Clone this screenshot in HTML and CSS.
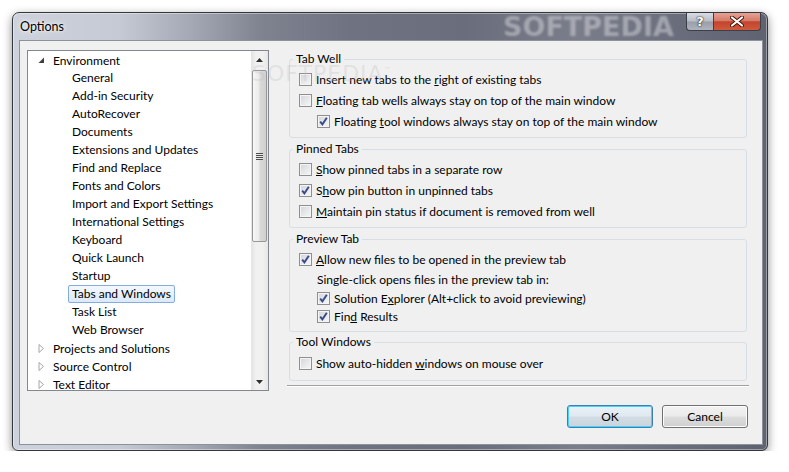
FILE: index.html
```
<!DOCTYPE html>
<html lang="en">
<head>
 <meta charset="UTF-8">
 <title>Options</title>
 <link rel="stylesheet" href="styles.css">
</head>
<body>
<div class="window">
 <div class="titlebar">
   <span class="title">Options</span>
   <span class="watermark">SOFTPEDIA</span>
   <div class="caption-buttons">
     <div class="cap-btn help">?</div>
     <div class="cap-btn close">
       <svg width="14" height="11" viewBox="0 0 14 11"><path d="M2 1.5 L12 9.5 M12 1.5 L2 9.5" stroke="#4a1208" stroke-width="4" stroke-linecap="round"/><path d="M2 1.5 L12 9.5 M12 1.5 L2 9.5" stroke="#fff" stroke-width="2.2" stroke-linecap="round"/></svg>
     </div>
   </div>
 </div>
 <div class="client">
   <div class="main">
     <div class="tree">
       <div class="tree-items">
         <div class="node"><span class="exp"><svg width="7" height="7" viewBox="0 0 7 7"><polygon points="6,0.5 6,6 0.5,6" fill="#404040"/></svg></span>Environment</div>
         <div class="node child"><span class="label">General</span></div>
         <div class="node child"><span class="label">Add-in Security</span></div>
         <div class="node child"><span class="label">AutoRecover</span></div>
         <div class="node child"><span class="label">Documents</span></div>
         <div class="node child"><span class="label">Extensions and Updates</span></div>
         <div class="node child"><span class="label">Find and Replace</span></div>
         <div class="node child"><span class="label">Fonts and Colors</span></div>
         <div class="node child"><span class="label">Import and Export Settings</span></div>
         <div class="node child"><span class="label">International Settings</span></div>
         <div class="node child"><span class="label">Keyboard</span></div>
         <div class="node child"><span class="label">Quick Launch</span></div>
         <div class="node child"><span class="label">Startup</span></div>
         <div class="node child"><span class="label selected">Tabs and Windows</span></div>
         <div class="node child"><span class="label">Task List</span></div>
         <div class="node child"><span class="label">Web Browser</span></div>
         <div class="node"><span class="exp"><svg width="7" height="9" viewBox="0 0 7 9"><polygon points="1,0.5 5.5,4.5 1,8.5" fill="none" stroke="#a6a6a6"/></svg></span>Projects and Solutions</div>
         <div class="node"><span class="exp"><svg width="7" height="9" viewBox="0 0 7 9"><polygon points="1,0.5 5.5,4.5 1,8.5" fill="none" stroke="#a6a6a6"/></svg></span>Source Control</div>
         <div class="node"><span class="exp"><svg width="7" height="9" viewBox="0 0 7 9"><polygon points="1,0.5 5.5,4.5 1,8.5" fill="none" stroke="#a6a6a6"/></svg></span>Text Editor</div>
       </div>
       <div class="scrollbar">
         <div class="sb-arrow"><svg width="7" height="4" viewBox="0 0 7 4"><polygon points="0,4 3.5,0 7,4" fill="#303030"/></svg></div>
         <div class="sb-track">
           <div class="sb-thumb"><span class="grip"></span></div>
         </div>
         <div class="sb-arrow"><svg width="7" height="4" viewBox="0 0 7 4"><polygon points="0,0 3.5,4 7,0" fill="#303030"/></svg></div>
       </div>
     </div>
     <div class="settings">
       <fieldset class="group">
         <legend>Tab Well</legend>
         <div class="opt"><span class="check"></span><span>Insert new tabs to the <u>r</u>ight of existing tabs</span></div>
         <div class="opt"><span class="check"></span><span><u>F</u>loating tab wells always stay on top of the main window</span></div>
         <div class="opt sub"><span class="check on"></span><span>Floating <u>t</u>ool windows always stay on top of the main window</span></div>
       </fieldset>
       <fieldset class="group">
         <legend>Pinned Tabs</legend>
         <div class="opt"><span class="check"></span><span><u>S</u>how pinned tabs in a separate row</span></div>
         <div class="opt"><span class="check on"></span><span>S<u>h</u>ow pin button in unpinned tabs</span></div>
         <div class="opt"><span class="check"></span><span><u>M</u>aintain pin status if document is removed from well</span></div>
       </fieldset>
       <fieldset class="group preview">
         <legend>Preview Tab</legend>
         <div class="opt"><span class="check on"></span><span><u>A</u>llow new files to be opened in the preview tab</span></div>
         <div class="opt sub note"><span>Single-click opens files in the preview tab in:</span></div>
         <div class="opt sub short"><span class="check on"></span><span>Solution E<u>x</u>plorer (Alt+click to avoid previewing)</span></div>
         <div class="opt sub short"><span class="check on"></span><span>Fin<u>d</u> Results</span></div>
       </fieldset>
       <fieldset class="group tool">
         <legend>Tool Windows</legend>
         <div class="opt"><span class="check"></span><span>Show auto-hidden <u>w</u>indows on mouse over</span></div>
       </fieldset>
       <div class="separator"></div>
     </div>
   </div>
   <div class="footer">
     <button class="btn default">OK</button>
     <button class="btn">Cancel</button>
   </div>
   <span class="watermark-faint">SOFTPEDIA<sup>™</sup></span>
 </div>
</div>
</body>
</html>
```

FILE: styles.css
```
body {
  margin: 0;
  background: #fff;
  font-family: Lato, "Noto Sans", sans-serif;
  font-size: 12px;
  color: #000;
}
.window {
  position: relative;
  width: 756px;
  height: 439px;
  margin: 12px 0 0 12px;
  box-sizing: border-box;
  border: 1px solid #34373e;
  border-radius: 7px 7px 6px 6px;
  padding: 0 4px 5px 6px;
  display: flex;
  flex-direction: column;
  background: linear-gradient(to right, #cdd2dc 0%, #c5cad4 14%, #a3a7b3 24%, #7f828f 33%, #6f7280 45%, #6a6d7b 60%, #7a7d8a 75%, #6a6e7c 88%, #5f6371 100%);
  box-shadow: 0 3px 10px rgba(0, 0, 0, 0.45), inset 0 0 0 1px rgba(255, 255, 255, 0.4);
}
.titlebar {
  position: relative;
  height: 27px;
  display: flex;
  align-items: center;
}
.title {
  padding-left: 1px;
  font-size: 12.5px;
  text-shadow: 0 0 6px rgba(255, 255, 255, 0.9), 0 0 3px rgba(255, 255, 255, 0.9);
}
.watermark {
  position: absolute;
  left: 484px;
  top: -2px;
  font-family: "DejaVu Sans", sans-serif;
  font-weight: bold;
  font-size: 27px;
  color: rgba(205, 207, 214, 0.55);
  filter: blur(0.8px);
}
.caption-buttons {
  position: absolute;
  top: 0;
  right: 2px;
  display: flex;
}
.cap-btn {
  height: 18px;
  box-sizing: border-box;
  border: 1px solid #3c3f47;
  border-top: none;
  display: flex;
  align-items: center;
  justify-content: center;
}
.help {
  width: 27px;
  border-radius: 0 0 0 4px;
  border-right: none;
  background: linear-gradient(#d9dce3 0%, #b9bdc7 48%, #999ea9 52%, #aeb3bd 100%);
  color: #fff;
  font-family: "DejaVu Sans", sans-serif;
  font-weight: bold;
  font-size: 13px;
  text-shadow: 0 0 2px #222, 0 0 1px #000;
}
.close {
  width: 48px;
  border-radius: 0 0 4px 0;
  background: linear-gradient(#e6a396 0%, #d57a69 45%, #c2442c 52%, #cf5a3e 100%);
}
.client {
  position: relative;
  flex: 1;
  background: #f0f0f0;
  border: 1px solid #8d9199;
  padding: 9px 0 0 7px;
  display: flex;
  flex-direction: column;
}
.main {
  display: flex;
}
.tree {
  width: 242px;
  height: 341px;
  box-sizing: border-box;
  border: 1px solid #828790;
  background: #fff;
  display: flex;
}
.tree-items {
  flex: 1;
  overflow: hidden;
}
.node {
  height: 18px;
  display: flex;
  align-items: center;
  padding-left: 10px;
  white-space: nowrap;
}
.exp {
  width: 9px;
  margin-right: 6px;
  display: flex;
  align-items: center;
}
.node.child {
  padding-left: 40px;
}
.label {
  height: 18px;
  line-height: 16px;
  box-sizing: border-box;
  padding: 0 3px;
  border: 1px solid transparent;
  border-radius: 2px;
}
.label.selected {
  border-color: #84acdd;
  background: linear-gradient(#f3f8fd, #dbe9fb);
}
.scrollbar {
  width: 17px;
  display: flex;
  flex-direction: column;
  background: linear-gradient(to right, #e3e3e3, #f1f1f1 30%, #f1f1f1 70%, #e6e6e6);
}
.sb-arrow {
  height: 17px;
  display: flex;
  align-items: center;
  justify-content: center;
}
.sb-track {
  flex: 1;
  padding-top: 2px;
}
.sb-thumb {
  height: 172px;
  margin: 0 1px;
  box-sizing: border-box;
  border: 1px solid #989898;
  border-radius: 2px;
  background: linear-gradient(to right, #f7f7f7, #ebebeb 45%, #d9d9d9 55%, #d0d0d0);
  display: flex;
  align-items: center;
  justify-content: center;
}
.grip {
  width: 7px;
  height: 7px;
  background: repeating-linear-gradient(#4d4d4d 0 1px, #e8e8e8 1px 2px);
}
.settings {
  margin-left: 18px;
  width: 462px;
  padding-top: 1px;
}
.group {
  margin: 0 2px 3px;
  padding: 2px 0 5px 9px;
  border: 1px solid #d5dfe5;
  border-radius: 3px;
  min-width: 0;
}
.group legend {
  padding: 0 3px;
  margin-left: -6px;
  line-height: 16px;
}
.group.preview {
  padding-bottom: 6px;
  margin-bottom: 2px;
}
.group.tool {
  padding-top: 3px;
  padding-bottom: 6px;
  margin-bottom: 0;
}
.opt {
  height: 21px;
  display: flex;
  align-items: center;
  white-space: nowrap;
}
.opt.sub {
  padding-left: 18px;
}
.opt.note {
  height: 19px;
}
.opt.short {
  height: 18px;
}
.check {
  flex: none;
  width: 13px;
  height: 13px;
  box-sizing: border-box;
  margin-right: 4px;
  border: 1px solid #8f8f8f;
  background: linear-gradient(135deg, #d3d5da, #f7f7f7);
  box-shadow: inset 0 0 0 1px #f4f4f4;
}
.check.on {
  background: url("data:image/svg+xml;utf8,<svg xmlns='http://www.w3.org/2000/svg' width='11' height='11'><path d='M2.2 5.6 L4.4 8.3 L8.8 1.8' fill='none' stroke='%23364a8a' stroke-width='1.9'/></svg>") center no-repeat, linear-gradient(135deg, #d3d5da, #f7f7f7);
}
.separator {
  margin-top: 4px;
  border-top: 1px solid #a0a0a0;
  border-bottom: 1px solid #fff;
}
.footer {
  margin-top: 14px;
  padding-right: 14px;
  display: flex;
  justify-content: flex-end;
  gap: 9px;
}
.btn {
  width: 86px;
  height: 23px;
  font: inherit;
  color: #000;
  border: 1px solid #707070;
  border-radius: 3px;
  background: linear-gradient(#f2f2f2 0%, #ebebeb 48%, #dddddd 52%, #cfcfcf 100%);
  box-shadow: inset 0 0 0 1px #fcfcfc;
}
.btn.default {
  border-color: #3c7fb1;
  background: linear-gradient(#eaf2f8 0%, #e0e9f0 48%, #d2dce4 52%, #c9d4dd 100%);
  box-shadow: inset 0 0 0 1px #48d2fb;
}
.watermark-faint {
  position: absolute;
  left: 232px;
  top: 20px;
  font-family: "DejaVu Sans", sans-serif;
  font-size: 22px;
  letter-spacing: 1px;
  color: rgba(190, 190, 190, 0.3);
  pointer-events: none;
}
.watermark-faint sup {
  font-size: 8px;
}
```
